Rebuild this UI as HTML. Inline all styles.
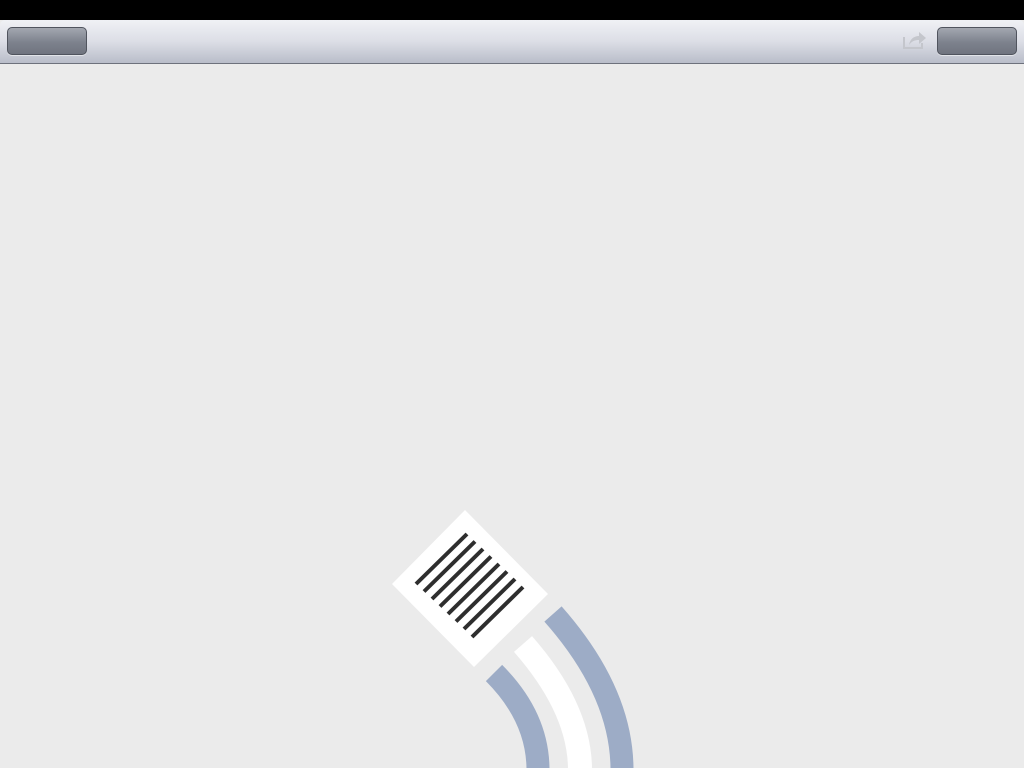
<!DOCTYPE html>
<html><head><meta charset="utf-8"><style>
html,body{margin:0;padding:0;width:1024px;height:768px;overflow:hidden;background:#ebebeb;font-family:"Liberation Sans",sans-serif}
.status{position:absolute;left:0;top:0;width:1024px;height:20px;background:#000}
.bar{position:absolute;left:0;top:20px;width:1024px;height:43px;background:linear-gradient(#f0f1f5,#dcdee6 50%,#b9bdc9);border-bottom:1px solid #6d717c;border-radius:5px 5px 0 0}
.btn{position:absolute;top:7px;width:78px;height:26px;border:1px solid #50545e;border-radius:5px;background:linear-gradient(#a3a7b0,#7d828d 55%,#70747f);box-shadow:0 1px 0 rgba(255,255,255,.5)}
</style></head><body>
<div class="status"></div>
<div class="bar">
 <div class="btn" style="left:7px"></div>
 <svg style="position:absolute;left:903px;top:10px" width="24" height="20" viewBox="0 0 24 20">
  <path d="M1 7 V18 H19 V13" fill="none" stroke="#c4c6cc" stroke-width="2"/>
  <path d="M6 15 C7 9 11 6 16 6 V2 L23 8 L16 14 V10 C12 10 9 11 6 15 Z" fill="#c4c6cc"/>
 </svg>
 <div class="btn" style="left:937px"></div>
</div>
<svg style="position:absolute;left:0;top:0" width="1024" height="768">
 <polygon points="465,510 548,594 474,667 392,584" fill="#fff"/>
 <g stroke="#2e2e2e" stroke-width="4">
  <line x1="416" y1="584" x2="467" y2="534"/>
  <line x1="424" y1="591.5" x2="475" y2="541.5"/>
  <line x1="432" y1="599" x2="483" y2="549"/>
  <line x1="440" y1="606.5" x2="491" y2="556.5"/>
  <line x1="448" y1="614" x2="499" y2="564"/>
  <line x1="456" y1="621.5" x2="507" y2="571.5"/>
  <line x1="464" y1="629" x2="515" y2="579"/>
  <line x1="472" y1="637" x2="523" y2="587"/>
 </g>
 <g fill="none" stroke-linecap="butt">
  <path d="M553 614 Q622 692 622 770" stroke="#9dacc6" stroke-width="23"/>
  <path d="M523 644 Q580 709 580 770" stroke="#fff" stroke-width="24"/>
  <path d="M494 673 Q538 717 538 770" stroke="#9dacc6" stroke-width="23"/>
 </g>
</svg>
</body></html>
